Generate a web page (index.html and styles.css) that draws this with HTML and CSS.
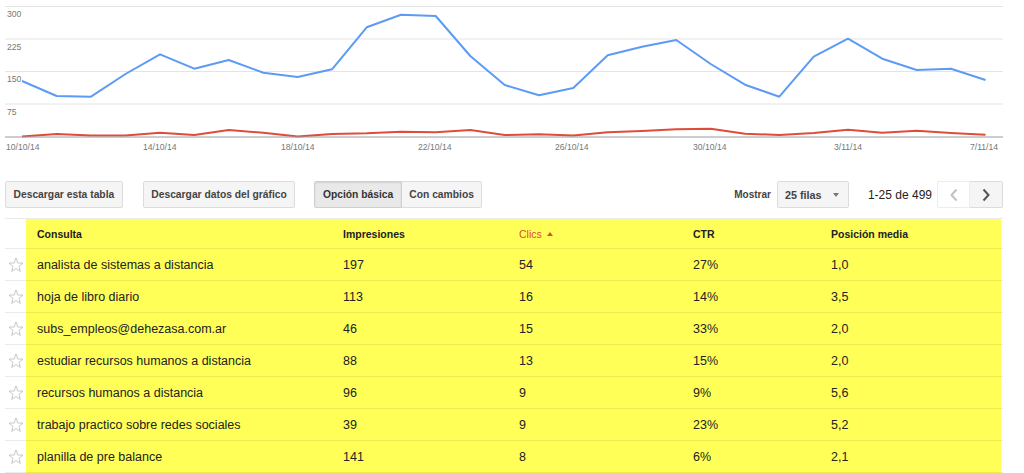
FILE: index.html
```html
<!DOCTYPE html>
<html lang="es">
<head>
<meta charset="utf-8">
<title>Consultas de búsqueda</title>
<link rel="stylesheet" href="styles.css">
</head>
<body>
<div class="chart">
  <svg class="chart-svg" width="1024" height="160" viewBox="0 0 1024 160">
    <g class="grid">
      <line x1="5" y1="6.5" x2="1003" y2="6.5"/>
      <line x1="5" y1="39" x2="1003" y2="39"/>
      <line x1="5" y1="71.5" x2="1003" y2="71.5"/>
      <line x1="5" y1="104" x2="1003" y2="104"/>
    </g>
    <g class="ylabels">
      <text x="7" y="17">300</text>
      <text x="7" y="49.5">225</text>
      <text x="7" y="82">150</text>
      <text x="7" y="114.5">75</text>
    </g>
    <polyline class="line-blue" points="22,81 56.7,96 91,96.7 125.5,74 160,54.3 194.3,68.7 228.7,60 263.3,72.7 297.7,77 332,69.3 366.7,27.3 401,14.7 435.7,16 470.3,56 504.7,85 539,95.3 573.3,88 607.7,55.3 642,46.7 676.3,40 710.7,64 745,84.7 779.3,96.7 813.7,56.7 848,38.7 882.3,58.7 916.7,70 951,68.7 985.5,80"/>
    <polyline class="line-red" points="22,136.5 56.7,134 91,135.5 125.5,135.5 160,132.7 194.3,135 228.7,130 263.3,132.7 297.7,136.5 332,134 366.7,133.3 401,131.7 435.7,132.3 470.3,130 504.7,135 539,134.3 573.3,135.5 607.7,132.3 642,131 676.3,129.3 710.7,128.7 745,133.7 779.3,135 813.7,133 848,129.7 882.3,132.7 916.7,130.7 951,133 985.5,134.7"/>
    <line class="baseline" x1="5" y1="137" x2="1003" y2="137"/>
    <g class="xlabels">
      <text x="6" y="150">10/10/14</text>
      <text x="143" y="150">14/10/14</text>
      <text x="281" y="150">18/10/14</text>
      <text x="418" y="150">22/10/14</text>
      <text x="555" y="150">26/10/14</text>
      <text x="693" y="150">30/10/14</text>
      <text x="834" y="150">3/11/14</text>
      <text x="970" y="150">7/11/14</text>
    </g>
  </svg>
</div>

<div class="toolbar">
  <div class="tools-left">
    <button class="btn">Descargar esta tabla</button>
    <button class="btn">Descargar datos del gráfico</button>
    <div class="segmented">
      <button class="btn seg seg-on">Opción básica</button>
      <button class="btn seg">Con cambios</button>
    </div>
  </div>
  <div class="tools-right">
    <span class="show-label">Mostrar</span>
    <div class="select"><span>25 filas</span><span class="caret"></span></div>
    <span class="range">1-25 de 499</span>
    <div class="pager">
      <button class="pbtn pbtn-off" aria-label="Anterior">
        <svg width="10" height="14" viewBox="0 0 10 14"><polyline points="7.5,1.5 2.5,7 7.5,12.5"/></svg>
      </button>
      <button class="pbtn pbtn-on" aria-label="Siguiente">
        <svg width="10" height="14" viewBox="0 0 10 14"><polyline points="2.5,1.5 7.5,7 2.5,12.5"/></svg>
      </button>
    </div>
  </div>
</div>

<table class="data">
  <colgroup>
    <col class="c-star"><col class="c-q"><col class="c-imp"><col class="c-clk"><col class="c-ctr"><col class="c-pos"><col class="c-end">
  </colgroup>
  <thead>
    <tr>
      <th class="star-cell"></th>
      <th>Consulta</th>
      <th>Impresiones</th>
      <th class="sorted">Clics <span class="sort-up"></span></th>
      <th>CTR</th>
      <th>Posición media</th>
      <th class="end-cell"></th>
    </tr>
  </thead>
  <tbody>
    <tr><td class="star-cell"><svg class="star" width="16" height="16" viewBox="0 0 16 16"><polygon points="8,1 9.9,6 15,6.1 11,9.3 12.4,14.5 8,11.5 3.6,14.5 5,9.3 1,6.1 6.1,6"/></svg></td><td>analista de sistemas a distancia</td><td>197</td><td>54</td><td>27%</td><td>1,0</td><td class="end-cell"></td></tr>
    <tr><td class="star-cell"><svg class="star" width="16" height="16" viewBox="0 0 16 16"><polygon points="8,1 9.9,6 15,6.1 11,9.3 12.4,14.5 8,11.5 3.6,14.5 5,9.3 1,6.1 6.1,6"/></svg></td><td>hoja de libro diario</td><td>113</td><td>16</td><td>14%</td><td>3,5</td><td class="end-cell"></td></tr>
    <tr><td class="star-cell"><svg class="star" width="16" height="16" viewBox="0 0 16 16"><polygon points="8,1 9.9,6 15,6.1 11,9.3 12.4,14.5 8,11.5 3.6,14.5 5,9.3 1,6.1 6.1,6"/></svg></td><td>subs_empleos@dehezasa.com.ar</td><td>46</td><td>15</td><td>33%</td><td>2,0</td><td class="end-cell"></td></tr>
    <tr><td class="star-cell"><svg class="star" width="16" height="16" viewBox="0 0 16 16"><polygon points="8,1 9.9,6 15,6.1 11,9.3 12.4,14.5 8,11.5 3.6,14.5 5,9.3 1,6.1 6.1,6"/></svg></td><td>estudiar recursos humanos a distancia</td><td>88</td><td>13</td><td>15%</td><td>2,0</td><td class="end-cell"></td></tr>
    <tr><td class="star-cell"><svg class="star" width="16" height="16" viewBox="0 0 16 16"><polygon points="8,1 9.9,6 15,6.1 11,9.3 12.4,14.5 8,11.5 3.6,14.5 5,9.3 1,6.1 6.1,6"/></svg></td><td>recursos humanos a distancia</td><td>96</td><td>9</td><td>9%</td><td>5,6</td><td class="end-cell"></td></tr>
    <tr><td class="star-cell"><svg class="star" width="16" height="16" viewBox="0 0 16 16"><polygon points="8,1 9.9,6 15,6.1 11,9.3 12.4,14.5 8,11.5 3.6,14.5 5,9.3 1,6.1 6.1,6"/></svg></td><td>trabajo practico sobre redes sociales</td><td>39</td><td>9</td><td>23%</td><td>5,2</td><td class="end-cell"></td></tr>
    <tr><td class="star-cell"><svg class="star" width="16" height="16" viewBox="0 0 16 16"><polygon points="8,1 9.9,6 15,6.1 11,9.3 12.4,14.5 8,11.5 3.6,14.5 5,9.3 1,6.1 6.1,6"/></svg></td><td>planilla de pre balance</td><td>141</td><td>8</td><td>6%</td><td>2,1</td><td class="end-cell"></td></tr>
  </tbody>
</table>
</body>
</html>
```

FILE: styles.css
```css
* { box-sizing: border-box; }

body {
  margin: 0;
  background: #fff;
  font-family: "Liberation Sans", Arial, sans-serif;
  color: #222;
  overflow: hidden;
}

.chart-svg { display: block; }

.grid line { stroke: #e4e4e4; stroke-width: 1; }
.baseline { stroke: #9a9a9a; stroke-width: 1; }

.ylabels text, .xlabels text {
  font-family: "Liberation Sans", Arial, sans-serif;
  font-size: 8.6px;
  fill: #777;
}

.line-blue { fill: none; stroke: #5c9bf5; stroke-width: 2; stroke-linejoin: round; }
.line-red { fill: none; stroke: #de4c3a; stroke-width: 2; stroke-linejoin: round; }

/* toolbar */
.toolbar {
  display: flex;
  justify-content: space-between;
  align-items: center;
  margin-top: 21px;
  padding: 0 21px 0 5px;
  height: 27px;
}

.tools-left, .tools-right {
  display: flex;
  align-items: center;
}

.tools-left { gap: 20px; }

.btn {
  height: 27px;
  padding: 0 7.5px;
  font-family: "Liberation Sans", Arial, sans-serif;
  font-size: 10.3px;
  font-weight: bold;
  color: #444;
  background: #f5f5f5;
  border: 1px solid #dcdcdc;
  border-radius: 2px;
  cursor: pointer;
}

.segmented { display: flex; margin-left: -1px; }
.seg { border-radius: 0; }
.seg:first-child { border-radius: 2px 0 0 2px; }
.seg:last-child { border-radius: 0 2px 2px 0; border-left: none; }
.seg-on {
  background: #e9e9e9;
  border-color: #cfcfcf;
  box-shadow: inset 0 1px 2px rgba(0,0,0,0.1);
  color: #333;
}

.show-label {
  font-size: 10px;
  font-weight: bold;
  color: #444;
  margin-right: 6px;
}

.select {
  display: flex;
  align-items: center;
  justify-content: space-between;
  width: 72px;
  height: 27px;
  padding: 0 9px 0 7px;
  background: #f5f5f5;
  border: 1px solid #dcdcdc;
  border-radius: 2px;
  font-size: 10.8px;
  font-weight: bold;
  color: #444;
}

.caret {
  width: 0;
  height: 0;
  border-left: 3.5px solid transparent;
  border-right: 3.5px solid transparent;
  border-top: 4px solid #777;
}

.range {
  font-size: 12px;
  color: #222;
  margin-left: 19px;
  margin-right: 5px;
}

.pager { display: flex; }

.pbtn {
  width: 33px;
  height: 27px;
  display: flex;
  align-items: center;
  justify-content: center;
  padding: 0;
  border: 1px solid #e2e2e2;
  cursor: pointer;
}
.pbtn svg polyline { fill: none; stroke-width: 2; }
.pbtn-off {
  background: #fff;
  border-radius: 2px 0 0 2px;
  border-color: #ececec;
}
.pbtn-off svg polyline { stroke: #c2c2c2; }
.pbtn-on {
  background: #f5f5f5;
  border-left: none;
  border-radius: 0 2px 2px 0;
  border-color: #dcdcdc;
}
.pbtn-on svg polyline { stroke: #555; }

/* table */
.data {
  margin: 10px 0 0 5px;
  width: 998px;
  border-collapse: collapse;
  table-layout: fixed;
  border-top: 1px solid #ebebeb;
}

.c-star { width: 21px; }
.c-q { width: 306px; }
.c-imp { width: 176px; }
.c-clk { width: 174px; }
.c-ctr { width: 138px; }
.c-pos { width: 181px; }
.c-end { width: 2px; }

.data th, .data td {
  background: #ffff57;
  border-bottom: 1px solid rgba(0,0,0,0.08);
  padding: 0 0 0 11px;
  text-align: left;
  vertical-align: middle;
  white-space: nowrap;
}

.data th {
  height: 30px;
  font-size: 10.5px;
  font-weight: bold;
  color: #222;
}

.data td {
  height: 32px;
  font-size: 12.5px;
  color: #222;
}

.data .star-cell, .data .end-cell {
  background: #fff;
  padding: 0;
}

.star { display: block; margin: 0 0 0 3px; }
.star polygon { fill: none; stroke: #c9c9c9; stroke-width: 1; stroke-linejoin: round; }

.data th.sorted { color: #dd4b39; font-weight: normal; }

.sort-up {
  display: inline-block;
  width: 0;
  height: 0;
  margin-left: 2px;
  vertical-align: 2px;
  border-left: 3.5px solid transparent;
  border-right: 3.5px solid transparent;
  border-bottom: 4px solid #dd4b39;
}
```
